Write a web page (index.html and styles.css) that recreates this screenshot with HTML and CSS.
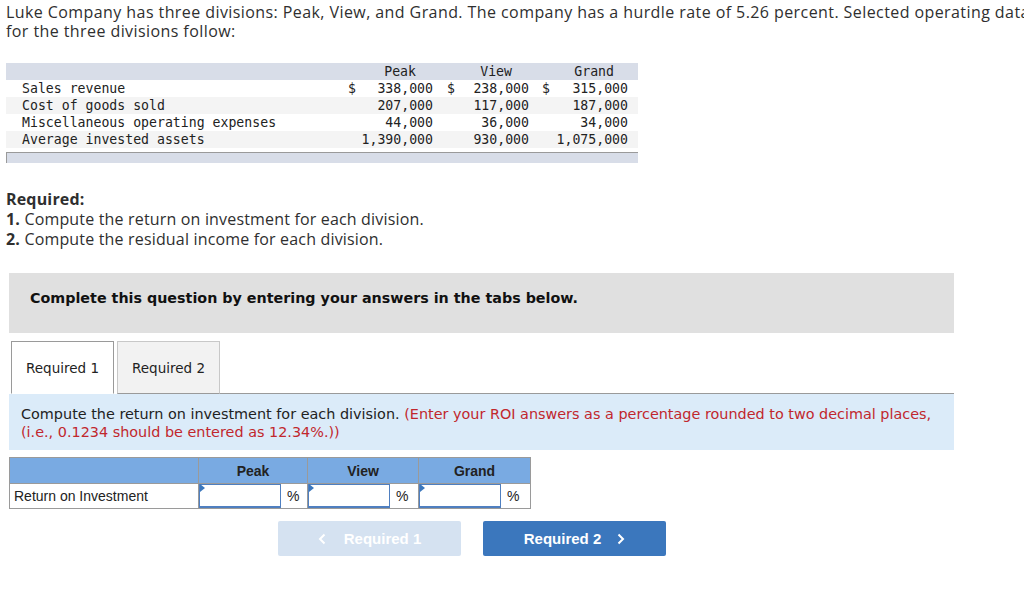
FILE: index.html
```html
<!DOCTYPE html>
<html>
<head>
<meta charset="utf-8">
<link rel="stylesheet" href="styles.css">
</head>
<body>
<div class="page">
  <p class="intro">Luke Company has three divisions: Peak, View, and Grand. The company has a hurdle rate of 5.26 percent. Selected operating data for the three divisions follow:</p>

  <div class="data">
    <div class="drow dhead">
      <div class="lbl"></div>
      <div class="hc">Peak</div>
      <div class="hc">View</div>
      <div class="hc">Grand</div>
    </div>
    <div class="drow">
      <div class="lbl">Sales revenue</div>
      <div class="nc c1"><span>$</span><span>338,000</span></div>
      <div class="nc c2"><span>$</span><span>238,000</span></div>
      <div class="nc c3"><span>$</span><span>315,000</span></div>
    </div>
    <div class="drow alt">
      <div class="lbl">Cost of goods sold</div>
      <div class="nc c1"><span></span><span>207,000</span></div>
      <div class="nc c2"><span></span><span>117,000</span></div>
      <div class="nc c3"><span></span><span>187,000</span></div>
    </div>
    <div class="drow">
      <div class="lbl">Miscellaneous operating expenses</div>
      <div class="nc c1"><span></span><span>44,000</span></div>
      <div class="nc c2"><span></span><span>36,000</span></div>
      <div class="nc c3"><span></span><span>34,000</span></div>
    </div>
    <div class="drow alt">
      <div class="lbl">Average invested assets</div>
      <div class="nc c1"><span></span><span>1,390,000</span></div>
      <div class="nc c2"><span></span><span>930,000</span></div>
      <div class="nc c3"><span></span><span>1,075,000</span></div>
    </div>
    <div class="dfoot"></div>
  </div>

  <div class="required">
    <p class="req-title">Required:</p>
    <p><b>1.</b> Compute the return on investment for each division.</p>
    <p><b>2.</b> Compute the residual income for each division.</p>
  </div>

  <div class="notice">Complete this question by entering your answers in the tabs below.</div>

  <div class="tabs">
    <div class="tab active">Required 1</div>
    <div class="tab">Required 2</div>
    <div class="tabline"></div>
  </div>

  <div class="instr">Compute the return on investment for each division. <span class="red">(Enter your ROI answers as a percentage rounded to two decimal places, (i.e., 0.1234 should be entered as 12.34%.))</span></div>

  <table class="ans">
    <tr class="ahead">
      <th class="alabel"></th>
      <th class="ac1">Peak</th>
      <th class="ac2">View</th>
      <th class="ac3">Grand</th>
    </tr>
    <tr>
      <td class="alabel">Return on Investment</td>
      <td><div class="cellwrap"><div class="inp"></div><span class="pct">%</span></div></td>
      <td><div class="cellwrap"><div class="inp"></div><span class="pct">%</span></div></td>
      <td><div class="cellwrap"><div class="inp"></div><span class="pct">%</span></div></td>
    </tr>
  </table>

  <div class="nav">
    <div class="btn disabled">
      <svg class="chev" width="8" height="12" viewBox="0 0 8 12"><polyline points="6.5,1.5 2,6 6.5,10.5" fill="none" stroke="#fff" stroke-width="2"/></svg>
      <span>Required 1</span>
    </div>
    <div class="btn primary">
      <span>Required 2</span>
      <svg class="chev" width="8" height="12" viewBox="0 0 8 12"><polyline points="1.5,1.5 6,6 1.5,10.5" fill="none" stroke="#fff" stroke-width="2"/></svg>
    </div>
  </div>
</div>
</body>
</html>
```

FILE: styles.css
```css
html { overflow: hidden; }
body {
  margin: 0;
  background: #fff;
  font-family: "Open Sans", "Liberation Sans", sans-serif;
  color: #2f2f2f;
}
p { margin: 0; }
.page {
  padding: 3px 0 0 6px;
  width: 1040px;
}
.intro {
  font-size: 16px;
  letter-spacing: 0.42px;
  line-height: 19px;
  width: 1030px;
}

/* data table */
.data {
  margin-top: 22px;
  width: 632px;
  font-family: "DejaVu Sans Mono", "Liberation Mono", monospace;
  font-size: 13.2px;
  color: #222;
}
.drow {
  display: grid;
  grid-template-columns: 337px 97px 96px 102px;
  height: 17px;
  line-height: 17px;
  background: #fff;
}
.drow.alt { background: #f4f4f4; }
.drow.dhead { background: #d8dde8; }
.lbl { padding-left: 16px; white-space: pre; }
.hc { text-align: right; padding-right: 24px; }
.nc { display: flex; justify-content: space-between; }
.nc.c1 { padding: 0 7px 0 5px; }
.nc.c2 { padding: 0 7px 0 7px; }
.nc.c3 { padding: 0 10px 0 6px; }
.dfoot {
  margin-top: 4px;
  height: 10px;
  background: #d8dde8;
  border-top: 1px solid #9a9a9a;
  border-left: 1px solid #9a9a9a;
}

/* required */
.required {
  margin-top: 26px;
  font-size: 16px;
  letter-spacing: 0.17px;
  line-height: 20px;
}
.req-title { font-weight: bold; }

/* notice */
.notice {
  margin: 24px 0 0 3px;
  width: 945px;
  height: 60px;
  box-sizing: border-box;
  padding: 0 0 0 21px;
  background: #e0e0e0;
  font-family: "DejaVu Sans", Verdana, sans-serif;
  font-weight: bold;
  font-size: 14.3px;
  line-height: 50px;
  color: #111;
}

/* tabs */
.tabs {
  margin: 8px 0 0 3px;
  width: 945px;
  display: flex;
  align-items: flex-end;
  height: 53px;
}
.tab {
  box-sizing: border-box;
  width: 103px;
  height: 53px;
  border: 1px solid #c8c8c8;
  border-bottom: 1px solid #9a9a9a;
  background: #f2f2f2;
  font-family: "DejaVu Sans", Verdana, sans-serif;
  font-size: 13.5px;
  color: #222;
  display: flex;
  align-items: center;
  justify-content: center;
  margin-right: 3px;
}
.tab.active {
  background: #fff;
  border-color: #9a9a9a;
  border-bottom: 1px solid #fff;
  margin-left: 2px;
}
.tabline {
  flex: 1;
  border-bottom: 1px solid #9a9a9a;
  margin-left: -3px;
}

/* instructions */
.instr {
  margin-left: 3px;
  width: 945px;
  box-sizing: border-box;
  padding: 11px 10px 9px 12px;
  background: #dbebf9;
  font-family: "DejaVu Sans", Verdana, sans-serif;
  font-size: 14.4px;
  line-height: 18px;
  color: #222;
}
.red { color: #c1272d; }

/* answer table */
.ans {
  margin: 7px 0 0 3px;
  border-collapse: collapse;
  font-family: "Liberation Sans", Arial, sans-serif;
  font-size: 14px;
  color: #222;
}
.ans th, .ans td {
  border: 1px solid #9a9a9a;
  padding: 0;
}
.ahead th {
  background: #79aae2;
  height: 25px;
  font-weight: bold;
  color: #222;
}
.ans .alabel { width: 184px; text-align: left; padding-left: 4px; height: 24px; }
.ac1 { width: 108px; }
.ac2 { width: 110px; }
.ac3 { width: 111px; }
.cellwrap { display: flex; align-items: center; height: 24px; }
.inp {
  position: relative;
  box-sizing: border-box;
  width: 82px;
  height: 24px;
  border: 1px solid #4f7fc0;
  border-bottom-width: 2px;
  background: #fff;
}
.inp::before {
  content: "";
  position: absolute;
  left: 0;
  top: 0;
  border-top: 4px solid transparent;
  border-bottom: 4px solid transparent;
  border-left: 5px solid #3b77bd;
  transform: translateY(-1px);
}
.pct { padding-left: 6px; }

/* nav buttons */
.nav {
  margin-top: 12px;
  padding-left: 272px;
  display: flex;
  gap: 22px;
}
.btn {
  width: 183px;
  height: 35px;
  border-radius: 2px;
  display: flex;
  align-items: center;
  justify-content: center;
  gap: 16px;
  font-family: "Liberation Sans", Arial, sans-serif;
  font-weight: bold;
  font-size: 15px;
  color: #fff;
}
.btn.disabled { background: #d5e2f1; gap: 18px; }
.btn.primary { background: #3b77bd; }
.chev { display: block; }
```
